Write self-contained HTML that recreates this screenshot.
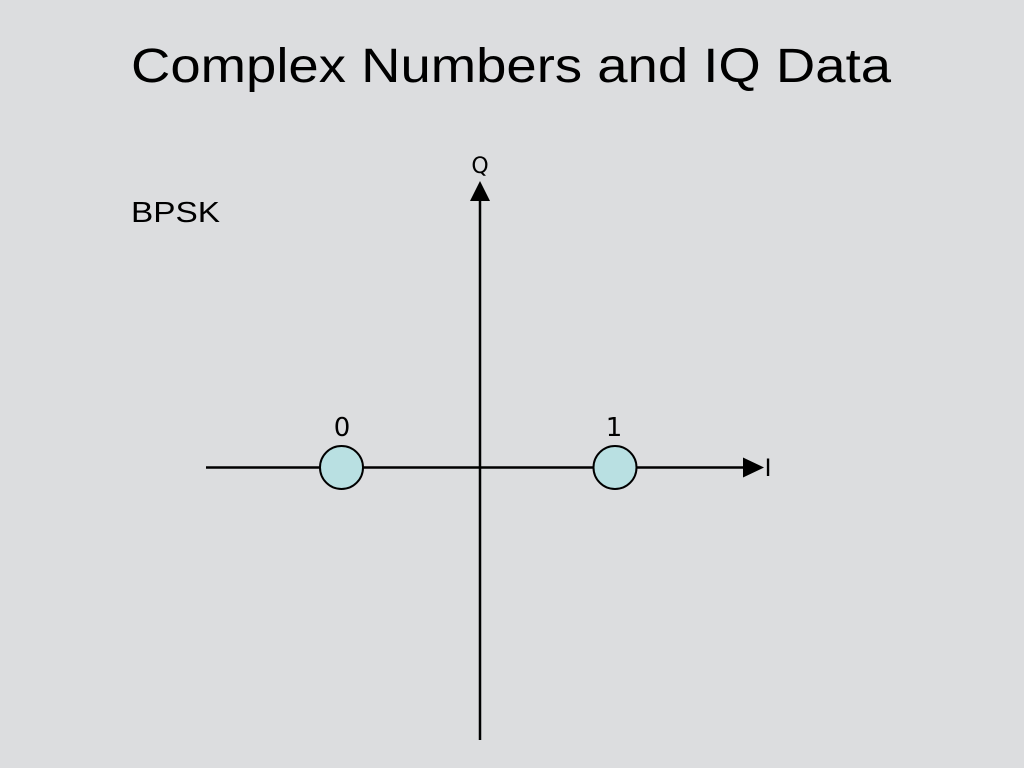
<!DOCTYPE html>
<html><head><style>
body{margin:0;width:1024px;height:768px;background:#dcdddf;overflow:hidden;font-family:"Liberation Sans",sans-serif;}
</style></head><body>
<svg width="1024" height="768" style="position:absolute;left:0;top:0">
<text x="511" y="82" text-anchor="middle" font-family="Liberation Sans" font-size="48" textLength="760" lengthAdjust="spacingAndGlyphs" fill="#000">Complex Numbers and IQ  Data</text>
<text x="131" y="222" font-family="Liberation Sans" font-size="29" textLength="89" lengthAdjust="spacingAndGlyphs" fill="#000">BPSK</text>
<line x1="480" y1="198" x2="480" y2="740" stroke="#000" stroke-width="2.5"/>
<polygon points="480,181 470,201 490,201" fill="#000"/>
<line x1="206" y1="467.5" x2="746" y2="467.5" stroke="#000" stroke-width="2.5"/>
<polygon points="764,467.5 743,457.5 743,477.5" fill="#000"/>
<circle cx="341.5" cy="467.5" r="21.5" fill="#b9e0e2" stroke="#000" stroke-width="2"/>
<circle cx="615" cy="467.5" r="21.5" fill="#b9e0e2" stroke="#000" stroke-width="2"/>
<g style="font-family:'DejaVu Sans',sans-serif" fill="#000" text-anchor="middle">
<text x="480" y="173" font-size="22">Q</text>
<text x="342" y="436" font-size="26">0</text>
<text x="614" y="436" font-size="26">1</text>
<text x="768" y="476" font-size="24">I</text>
</g>
</svg>
</body></html>
